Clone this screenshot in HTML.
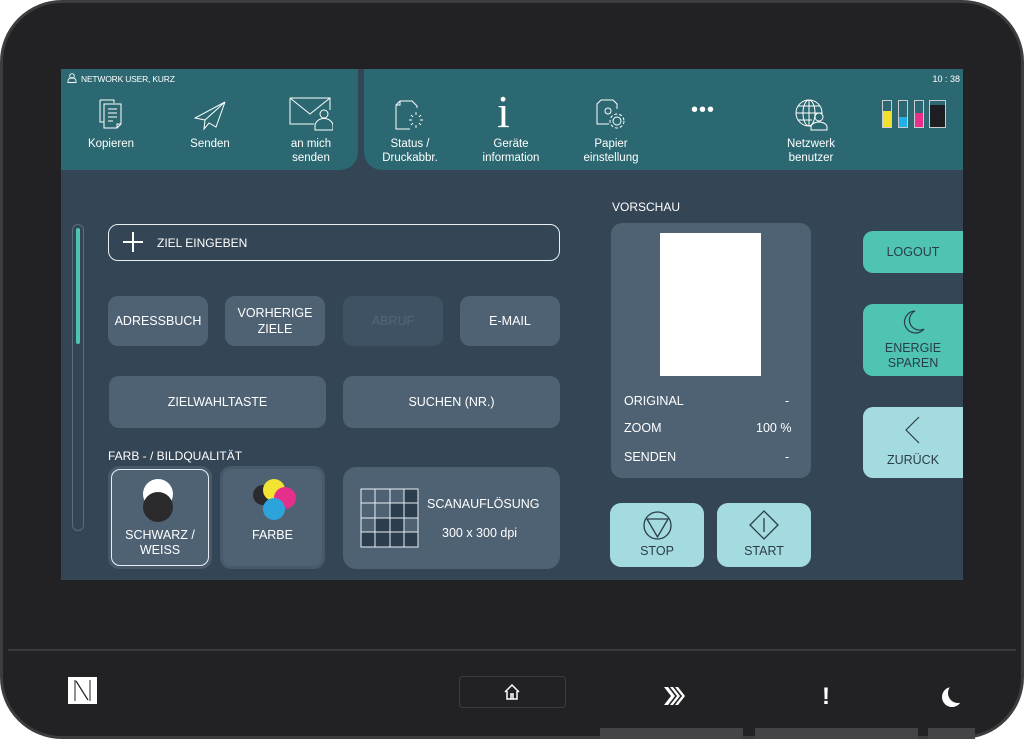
<!DOCTYPE html>
<html><head><meta charset="utf-8"><style>
*{margin:0;padding:0;box-sizing:border-box}
body{width:1024px;height:739px;background:#fff;font-family:"Liberation Sans",sans-serif;overflow:hidden;position:relative}
.bezel{position:absolute;left:0;top:0;width:1024px;height:739px;background:#222224;border:3px solid #3d3d3f;border-radius:62px}
.line{position:absolute;left:8px;right:8px;top:649px;height:2px;background:#3a3a3c}
.screen{position:absolute;left:61px;top:69px;width:902px;height:511px;background:#344556;overflow:hidden}
.tab{position:absolute;top:0;height:101px;background:#2b6871}
.t1{left:0;width:297px;border-bottom-right-radius:18px}
.t2{left:303px;width:599px;border-bottom-left-radius:18px}
.ab{position:absolute;color:#fff;text-align:center}
.lbl{font-size:11.5px;line-height:14px;color:#fff;text-align:center;position:absolute;width:90px}
.btn{position:absolute;background:#4f6274;border-radius:10px;color:#fff;font-size:12.5px;display:flex;align-items:center;justify-content:center;text-align:center;line-height:16px}
.side{position:absolute;border-radius:10px 0 0 10px;color:#2a3d48;font-size:12.5px;text-align:center;font-weight:normal}
svg{position:absolute}
</style></head><body>
<div class="bezel"></div>
<div class="line"></div>
<div style="position:absolute;left:600px;top:728px;width:143px;height:11px;background:#444446"></div>
<div style="position:absolute;left:755px;top:728px;width:163px;height:11px;background:#444446"></div>
<div style="position:absolute;left:928px;top:728px;width:47px;height:11px;background:#444446"></div>
<div class="screen">
 <div class="tab t1"></div><div class="tab t2"></div>
 <svg style="left:6px;top:4px" width="10" height="10" viewBox="0 0 10 10"><circle cx="5" cy="3" r="2.3" fill="none" stroke="#fff" stroke-width=".9"/><path d="M1 9.5v-1.5a3 2.5 0 0 1 8 0v1.5z" fill="none" stroke="#fff" stroke-width=".9"/></svg>
 <div class="ab" style="left:20px;top:5px;font-size:8.5px;letter-spacing:-.2px">NETWORK USER, KURZ</div>
 <div class="ab" style="right:3px;top:5px;font-size:9px">10 : 38</div>
 <svg style="left:37px;top:30px" width="30" height="32" viewBox="0 0 30 32" fill="none" stroke="#fff" stroke-width="1"><path d="M2 1h14v3M2 1v22h4"/><path d="M6 5h17v20l-4 4H6z"/><path d="M10 10h9M10 14h9M10 18h9M10 22h5"/><path d="M19 29v-4h4"/></svg>
 <div class="lbl" style="left:5px;top:68px">Kopieren</div>
 <svg style="left:133px;top:32px" width="32" height="30" viewBox="0 0 32 30" fill="none" stroke="#fff" stroke-width="1"><path d="M31 1L1 17l10 2zM31 1L11 19l-1 9 5-6 7 4z"/></svg>
 <div class="lbl" style="left:104px;top:68px">Senden</div>
 <svg style="left:228px;top:28px" width="44" height="34" viewBox="0 0 44 34" fill="none" stroke="#fff" stroke-width="1"><path d="M1 1h40v12M1 1v26h24M1 1l20 16 20-16"/><circle cx="35" cy="17" r="4"/><path d="M26 33v-4a6 5 0 0 1 18 0v4z"/></svg>
 <div class="lbl" style="left:205px;top:68px">an mich<br>senden</div>
 <svg style="left:334px;top:31px" width="30" height="30" viewBox="0 0 30 30" fill="none" stroke="#fff" stroke-width="1"><path d="M5 1h12l5 5v2M5 1L1 5v24h14M1 5h4V1"/><path d="M21 12v3M21 25v3M14 20h3M25 20h3M16 15l2 2M24 23l2 2M26 15l-2 2M16 25l2-2" stroke-width=".9"/></svg>
 <div class="lbl" style="left:304px;top:68px">Status /<br>Druckabbr.</div>
 <div class="ab" style="left:436px;top:20px;font-family:'Liberation Serif',serif;font-size:46px;line-height:46px">i</div>
 <div class="lbl" style="left:405px;top:68px">Geräte<br>information</div>
 <svg style="left:535px;top:30px" width="32" height="32" viewBox="0 0 32 32" fill="none" stroke="#fff" stroke-width="1"><path d="M5 1h12l4 4v5M5 1L1 5v20h12"/><circle cx="12" cy="12" r="3"/><circle cx="21" cy="22" r="4"/><circle cx="21" cy="22" r="7" stroke-dasharray="3 2"/></svg>
 <div class="lbl" style="left:505px;top:68px">Papier<br>einstellung</div>
 <div class="ab" style="left:630px;top:30px;font-size:20px;letter-spacing:1px">•••</div>
 <svg style="left:734px;top:30px" width="34" height="32" viewBox="0 0 34 32" fill="none" stroke="#fff" stroke-width="1"><circle cx="14" cy="14" r="13"/><ellipse cx="14" cy="14" rx="6" ry="13"/><path d="M1 14h26M3 7h22M3 21h14M14 1v26"/><circle cx="24" cy="18" r="4" fill="#2b6871"/><path d="M16 31v-3a8 5 0 0 1 16 0v3z" fill="#2b6871"/></svg>
 <div class="lbl" style="left:705px;top:68px">Netzwerk<br>benutzer</div>
 <div style="position:absolute;left:821px;top:31px;width:10px;height:28px;border:1px solid #ccc"><div style="position:absolute;bottom:0;left:0;right:0;height:16px;background:#f2e030"></div></div>
 <div style="position:absolute;left:837px;top:31px;width:10px;height:28px;border:1px solid #ccc"><div style="position:absolute;bottom:0;left:0;right:0;height:10px;background:#22b0e8"></div></div>
 <div style="position:absolute;left:853px;top:31px;width:10px;height:28px;border:1px solid #ccc"><div style="position:absolute;bottom:0;left:0;right:0;height:14px;background:#e8308a"></div></div>
 <div style="position:absolute;left:868px;top:31px;width:17px;height:28px;border:1px solid #ccc"><div style="position:absolute;bottom:0;left:0;right:0;height:22px;background:#1e1e22"></div></div>

 <div style="position:absolute;left:11px;top:155px;width:12px;height:307px;border:1px solid #5a6d7d;border-radius:6px"></div>
 <div style="position:absolute;left:15px;top:159px;width:4px;height:116px;background:#4fc4b0;border-radius:2px"></div>

 <div style="position:absolute;left:47px;top:155px;width:452px;height:37px;border:1.5px solid #e8eef2;border-radius:10px"></div>
 <svg style="left:61px;top:162px" width="22" height="22" viewBox="0 0 22 22"><path d="M11 1v20M1 11h20" stroke="#fff" stroke-width="2"/></svg>
 <div class="ab" style="left:96px;top:167px;font-size:12px">ZIEL EINGEBEN</div>

 <div class="btn" style="left:47px;top:227px;width:100px;height:50px">ADRESSBUCH</div>
 <div class="btn" style="left:164px;top:227px;width:100px;height:50px">VORHERIGE<br>ZIELE</div>
 <div class="btn" style="left:282px;top:227px;width:100px;height:50px;background:#3f5263;color:#52667a">ABRUF</div>
 <div class="btn" style="left:399px;top:227px;width:100px;height:50px">E-MAIL</div>
 <div class="btn" style="left:48px;top:307px;width:217px;height:52px">ZIELWAHLTASTE</div>
 <div class="btn" style="left:282px;top:307px;width:217px;height:52px">SUCHEN (NR.)</div>

 <div class="ab" style="left:47px;top:380px;font-size:12px">FARB - / BILDQUALITÄT</div>
 <div style="position:absolute;left:47px;top:397px;width:104px;height:103px;border-radius:11px;background:#4f6274;border:3px solid #47596a"></div>
 <div style="position:absolute;left:50px;top:400px;width:98px;height:97px;border-radius:9px;border:1.5px solid #e8eef2"></div>
 <div style="position:absolute;left:82px;top:410px;width:30px;height:30px;border-radius:50%;background:#fff"></div>
 <div style="position:absolute;left:82px;top:423px;width:30px;height:30px;border-radius:50%;background:#2b2b2d"></div>
 <div class="ab" style="left:50px;top:459px;width:98px;font-size:12.5px;line-height:15px">SCHWARZ /<br>WEISS</div>
 <div style="position:absolute;left:159px;top:397px;width:105px;height:103px;border-radius:11px;background:#4f6274;border:3px solid #47596a"></div>
 <div style="position:absolute;left:192px;top:416px;width:20px;height:20px;border-radius:50%;background:#2b2b2d"></div>
 <div style="position:absolute;left:202px;top:410px;width:22px;height:22px;border-radius:50%;background:#f3e434"></div>
 <div style="position:absolute;left:213px;top:418px;width:22px;height:22px;border-radius:50%;background:#e52f8c"></div>
 <div style="position:absolute;left:202px;top:429px;width:22px;height:22px;border-radius:50%;background:#2da3dc"></div>
 <div class="ab" style="left:159px;top:459px;width:105px;font-size:12.5px">FARBE</div>
 <div class="btn" style="left:282px;top:398px;width:217px;height:102px;border-radius:13px;display:block"></div>
 <svg style="left:299px;top:419px" width="60" height="60" viewBox="0 0 60 60"><g fill="#2c3e4e"><rect x="44" y="1" width="14" height="14"/><rect x="30" y="15" width="14" height="15"/><rect x="44" y="15" width="14" height="15"/><rect x="15" y="30" width="15" height="14"/><rect x="30" y="30" width="14" height="14"/><rect x="1" y="44" width="14" height="15"/><rect x="15" y="44" width="15" height="15"/><rect x="30" y="44" width="14" height="15"/><rect x="44" y="44" width="14" height="15"/></g><path d="M1 1h57v58H1zM15 1v58M30 1v58M44 1v58M1 15h57M1 30h57M1 44h57" stroke="#e8eef2" stroke-width="1" fill="none"/></svg>
 <div class="ab" style="left:366px;top:428px;font-size:12.5px">SCANAUFLÖSUNG</div>
 <div class="ab" style="left:381px;top:457px;font-size:12.5px">300 x 300 dpi</div>

 <div class="ab" style="left:551px;top:131px;font-size:12px">VORSCHAU</div>
 <div style="position:absolute;left:550px;top:154px;width:200px;height:255px;background:#4f6274;border-radius:11px"></div>
 <div style="position:absolute;left:599px;top:164px;width:101px;height:143px;background:#fff"></div>
 <div class="ab" style="left:563px;top:325px;font-size:12.5px">ORIGINAL</div><div class="ab" style="left:724px;top:325px;font-size:12.5px">-</div>
 <div class="ab" style="left:563px;top:352px;font-size:12.5px">ZOOM</div><div class="ab" style="left:695px;top:352px;font-size:12.5px">100 %</div>
 <div class="ab" style="left:563px;top:381px;font-size:12.5px">SENDEN</div><div class="ab" style="left:724px;top:381px;font-size:12.5px">-</div>

 <div style="position:absolute;left:549px;top:434px;width:94px;height:64px;background:#a4dbe0;border-radius:11px"></div>
 <svg style="left:582px;top:442px" width="29" height="29" viewBox="0 0 29 29" fill="none" stroke="#2a3d48" stroke-width="1.3"><circle cx="14.5" cy="14.5" r="13.5"/><path d="M4 8h21L14.5 26z"/></svg>
 <div class="ab" style="left:549px;top:475px;width:94px;font-size:12.5px;color:#2a3d48">STOP</div>
 <div style="position:absolute;left:656px;top:434px;width:94px;height:64px;background:#a4dbe0;border-radius:11px"></div>
 <svg style="left:688px;top:441px" width="30" height="30" viewBox="0 0 30 30" fill="none" stroke="#2a3d48" stroke-width="1.3"><path d="M15 1l14 14-14 14L1 15z"/><path d="M15 8v14"/></svg>
 <div class="ab" style="left:656px;top:475px;width:94px;font-size:12.5px;color:#2a3d48">START</div>

 <div class="side" style="left:802px;top:162px;width:100px;height:42px;background:#4fc4b3;line-height:42px">LOGOUT</div>
 <div class="side" style="left:802px;top:235px;width:100px;height:72px;background:#4fc4b3"></div>
 <svg style="left:842px;top:241px" width="22" height="24" viewBox="0 0 22 24" fill="none" stroke="#2a3d48" stroke-width="1.2"><path d="M12 1a11 11 0 1 0 9 18A9 9 0 0 1 12 1z"/></svg>
 <div class="ab" style="left:802px;top:272px;width:100px;font-size:12.5px;line-height:15px;color:#2a3d48">ENERGIE<br>SPAREN</div>
 <div class="side" style="left:802px;top:338px;width:100px;height:71px;background:#a4dbe0"></div>
 <svg style="left:843px;top:347px" width="16" height="28" viewBox="0 0 16 28" fill="none" stroke="#2a3d48" stroke-width="1.2"><path d="M15 1L2 14l13 13"/></svg>
 <div class="ab" style="left:802px;top:384px;width:100px;font-size:12.5px;color:#2a3d48">ZURÜCK</div>
</div>
<div style="position:absolute;left:68px;top:677px;width:29px;height:27px;background:#fff"></div>
<svg style="left:68px;top:677px;position:absolute" width="29" height="27" viewBox="0 0 29 27"><path d="M8 4l12 19" stroke="#222224" stroke-width="1.2"/><path d="M7 3v21M22 3v21" stroke="#222224" stroke-width="1"/></svg>
<div style="position:absolute;left:459px;top:676px;width:107px;height:32px;border:1.5px solid #3c3c3e;border-radius:4px"></div>
<svg style="position:absolute;left:503px;top:683px" width="18" height="18" viewBox="0 0 18 18" fill="none" stroke="#fff" stroke-width="1.5"><path d="M2 9l7-7 7 7M4 8v8h10V8M8 16v-5h2v5"/></svg>
<svg style="position:absolute;left:664px;top:687px" width="24" height="18" viewBox="0 0 24 18" fill="#fff"><path d="M0 0h4l7 9-7 9H0l7-9zM6 0h3l7 9-7 9H6l7-9zM11 0h3l7 9-7 9h-3l7-9z"/></svg>
<div style="position:absolute;left:822px;top:683px;color:#fff;font-size:24px;font-weight:bold">!</div>
<svg style="position:absolute;left:940px;top:684px" width="24" height="26" viewBox="0 0 24 26"><circle cx="12" cy="13" r="10" fill="#fff"/><circle cx="18" cy="9" r="10" fill="#222224"/></svg>
</body></html>
